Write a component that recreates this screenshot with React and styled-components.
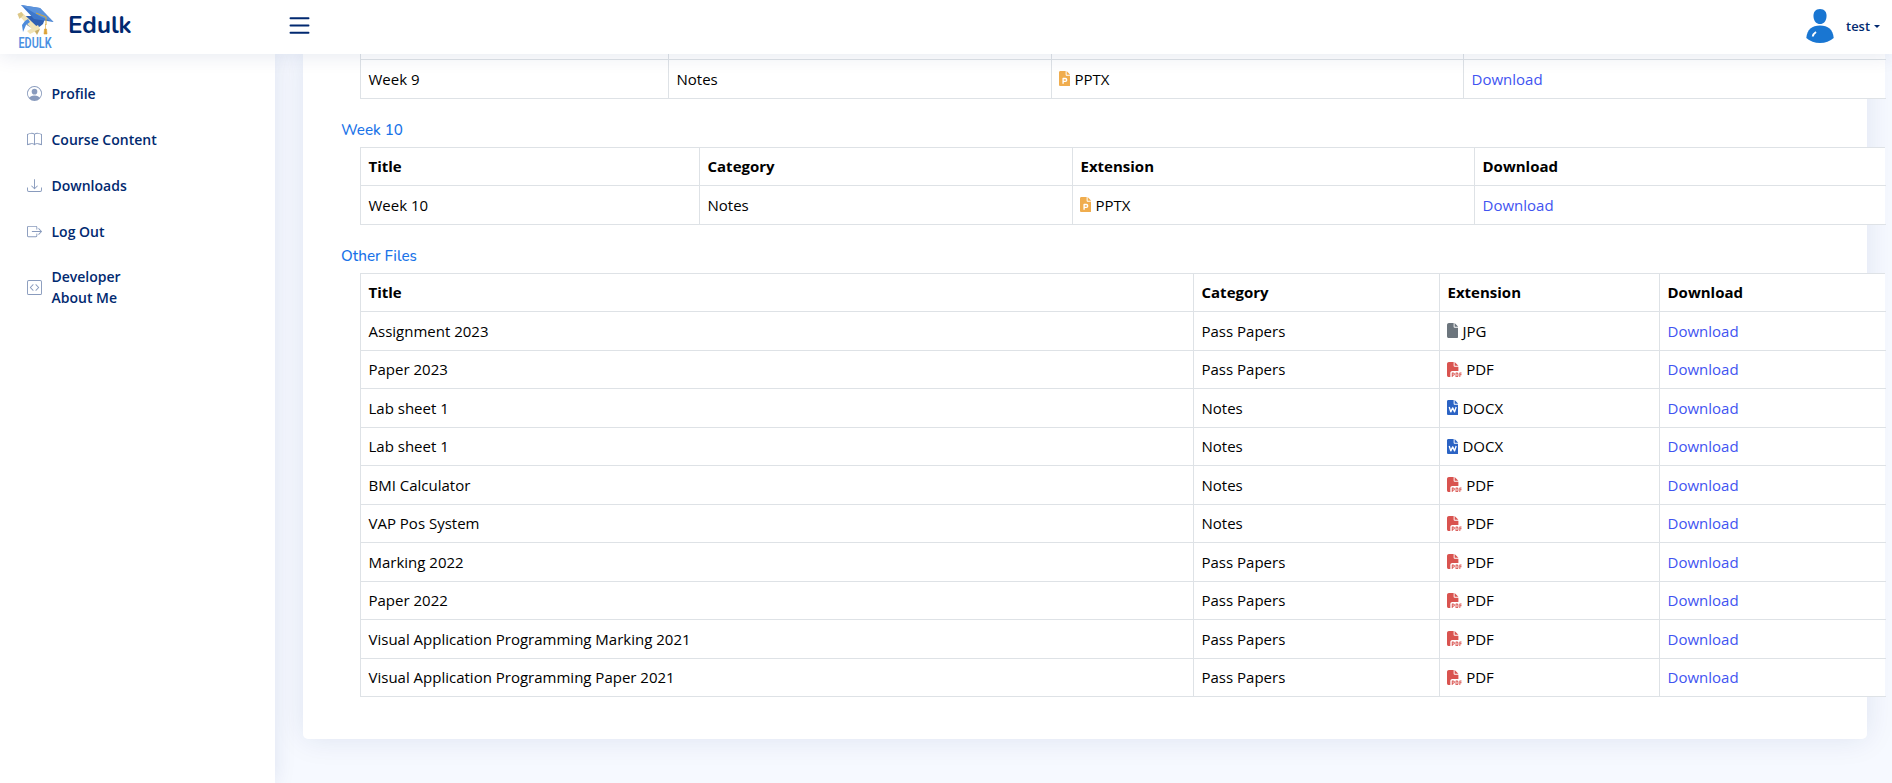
import React from "react";
import styled, { createGlobalStyle } from "styled-components";
import { BsPersonCircle, BsBook, BsDownload, BsBoxArrowRight, BsCodeSquare, BsList } from "react-icons/bs";
import { FaFile, FaFilePdf } from "react-icons/fa6";

const Global = createGlobalStyle`
  * { box-sizing: border-box; }
  body {
    margin: 0;
    height: 783px;
    overflow: hidden;
    background: #f6f9ff;
    color: #000;
    font-family: "Open Sans", sans-serif;
  }
`;

const Page = styled.div`
  display: flex;
  flex-direction: column;
  width: 100%;
  height: 783px;
  overflow: hidden;
`;

const Header = styled.header`
  display: flex;
  align-items: center;
  flex: none;
  height: 54px;
  padding: 0 12px 0 17px;
  background: #fff;
  box-shadow: 0 2px 20px rgba(1, 41, 112, 0.1);
  z-index: 2;
`;

const Brand = styled.div`
  display: flex;
  align-items: center;
  width: 268px;
  height: 54px;
`;

const BrandName = styled.span`
  margin: -3px 0 0 13px;
  color: #012970;
  font: 700 24.2px/28px Nunito, "Open Sans", sans-serif;
`;

const MenuToggle = styled.button`
  display: flex;
  padding: 0;
  border: 0;
  background: none;
  color: #012970;
  font-size: 29px;
  margin-top: -2.5px;
`;

const Account = styled.div`
  display: flex;
  align-items: center;
  margin-left: auto;
  color: #012970;
  font-size: 12.9px;
  font-weight: 600;
  line-height: 20px;

  svg { margin-top: -2px; }
`;

const AccountName = styled.span`
  margin: -3px 0 0 12px;
`;

const Caret = styled.span`
  margin: -2px 0 0 4px;
  border: 3px solid transparent;
  border-top-color: #012970;
  border-bottom: 0;
`;

const Body = styled.div`
  display: flex;
  flex: 1;
  min-height: 0;
`;

const Sidebar = styled.nav`
  flex: none;
  width: 275px;
  padding: 18px 18px 0;
  background: #fff;
  box-shadow: 0 0 20px rgba(1, 41, 112, 0.1);
`;

const NavItem = styled.a`
  display: flex;
  align-items: center;
  min-height: ${(p) => (p.$tall ? 62 : 42)}px;
  margin-bottom: 4px;
  padding: 0 9px;
  color: #012970;
  font-size: 14px;
  font-weight: 600;
  line-height: 21px;
  white-space: pre-line;

  svg {
    flex: none;
    margin-right: 9.5px;
    font-size: 15px;
    color: #899bbd;
  }
`;

const Main = styled.main`
  flex: 1;
  min-width: 0;
  padding: 0 25px 0 28px;
`;

const Card = styled.section`
  height: 685px;
  padding-left: 38px;
  background: #fff;
  border-radius: 0 0 5px 5px;
  box-shadow: 0 0 30px rgba(1, 41, 112, 0.1);
`;

const SectionTitle = styled.h2`
  display: flex;
  align-items: center;
  height: ${(p) => p.$height}px;
  margin: 0;
  padding-top: 14px;
  color: #1a73e8;
  font: 500 15.2px/20px Nunito, "Open Sans", sans-serif;
`;

const Table = styled.div`
  width: 1525px;
  margin-left: 19px;
  background: #fff;
  border: 1px solid #dee2e6;
  border-width: ${(p) => (p.$cropped ? "0 0 0 1px" : "1px 0 0 1px")};
  font-size: 15px;
`;

const Row = styled.div`
  display: grid;
  grid-template-columns: ${(p) => p.$columns};
  height: ${(p) => p.$height || 38.5}px;
  font-weight: ${(p) => (p.$head ? 700 : 400)};
`;

const Cell = styled.div`
  display: flex;
  align-items: center;
  padding: 0 7.5px 0.4px;
  border: 1px solid #dee2e6;
  border-width: 0 1px 1px 0;
  white-space: nowrap;

  &:last-child { border-right: 0; }
`;

const FileType = styled.span`
  display: flex;
  align-items: center;
  gap: 4px;
  margin-left: -0.5px;

  svg {
    flex: none;
    width: ${(p) => p.$width}px;
    height: 15.2px;
    color: ${(p) => p.$color};
  }
`;

const DownloadLink = styled.a`
  color: #4154f1;
`;

function OfficeFile({ mark }) {
  return (
    <svg viewBox="0 0 384 512" fill="currentColor">
      <path d="M50 0C20 0 0 20 0 50V462c0 30 20 50 50 50H334c30 0 50-20 50-50V160H256c-18 0-32-14-32-32V0Z" />
      <path d="M256 0V128H384Z" />
      <path d={mark} fill="none" stroke="#fff" strokeWidth="46" strokeLinejoin="round" />
    </svg>
  );
}

const WordFile = () => <OfficeFile mark="M75 235 128 400 192 265 256 400 309 235" />;
const SlidesFile = () => <OfficeFile mark="M138 430V252h72a50 50 0 0 1 0 100h-72" />;

const types = {
  JPG: [FaFile, "#6c757d", 11.4],
  PDF: [FaFilePdf, "#d9534f", 15.2],
  DOCX: [WordFile, "#2b63c4", 11.4],
  PPTX: [SlidesFile, "#f0ad4e", 11.4],
};

const headings = ["Title", "Category", "Extension", "Download"];

function FileTable({ columns, rows, cropped = false }) {
  return (
    <Table role="table" $cropped={cropped}>
      {cropped ? (
        <Row $columns={columns} $height={6}>
          {headings.map((t) => <Cell key={t} />)}
        </Row>
      ) : (
        <Row role="row" $head $columns={columns}>
          {headings.map((t) => <Cell role="columnheader" key={t}>{t}</Cell>)}
        </Row>
      )}
      {rows.map(([title, category, kind], i) => {
        const [Icon, color, width] = types[kind];
        return (
          <Row role="row" key={i} $columns={columns} $height={cropped ? 39 : 38.5}>
            <Cell role="cell">{title}</Cell>
            <Cell role="cell">{category}</Cell>
            <Cell role="cell">
              <FileType $color={color} $width={width}><Icon />{kind}</FileType>
            </Cell>
            <Cell role="cell"><DownloadLink>Download</DownloadLink></Cell>
          </Row>
        );
      })}
    </Table>
  );
}

const otherFiles = [
  ["Assignment 2023", "Pass Papers", "JPG"],
  ["Paper 2023", "Pass Papers", "PDF"],
  ["Lab sheet 1", "Notes", "DOCX"],
  ["Lab sheet 1", "Notes", "DOCX"],
  ["BMI Calculator", "Notes", "PDF"],
  ["VAP Pos System", "Notes", "PDF"],
  ["Marking 2022", "Pass Papers", "PDF"],
  ["Paper 2022", "Pass Papers", "PDF"],
  ["Visual Application Programming Marking 2021", "Pass Papers", "PDF"],
  ["Visual Application Programming Paper 2021", "Pass Papers", "PDF"],
];

function Logo() {
  return (
    <svg width="38" height="54" viewBox="0 -2 38 54" overflow="visible">
      <path d="M8 14 10 23Q18 30 26 22L29 14Z" fill="#2f5fb3" />
      <path d="M4 3 23 6 36.500 20 17 17Z" fill="#3e78cc" />
      <path d="M4 3 23 6 36.500 20 24 15Z" fill="#5b93dc" />
      <path d="M19 11 29 15v8" fill="none" stroke="#d9a93a" strokeWidth="1" />
      <path d="m.500 12 4-2 18 17-3 5Z" fill="#f1e3b6" />
      <path d="m10 29 11-6 2 4-10 5Z" fill="#f1e3b6" />
      <path d="m.500 12 4-2 2 3-4 4Z" fill="#dcc788" />
      <path d="m18 29 5-2-3 6Z" fill="#c9ae68" />
      <path d="m8 19 3-2 2 3-4 3-3 7-1-7Z" fill="#4d8bdc" />
      <path d="M28.500 22v5M27.500 27h2l.5 5h-3Z" fill="#dda135" stroke="#dda135" strokeWidth="0.6" />
      <text x="1.500" y="45.800" fill="#4a90e2" fontFamily="Roboto, sans-serif" fontWeight="600" fontSize="15.500" textLength="33" lengthAdjust="spacingAndGlyphs">EDULK</text>
    </svg>
  );
}

function Avatar() {
  return (
    <svg width="28" height="36" viewBox="0 0 28 36">
      <path d="M14 1C18.500 1 21 4 20.500 9 20 13.500 17.500 16 14 16S8 13.500 7.500 9C7 4 9.500 1 14 1Z" fill="#1976d2" />
      <path d="M.3 30C1 21.500 6 17.500 14 17.500S27 21.500 27.700 30Q22 35 14 35T.3 30Z" fill="#1976d2" />
      <path d="M6.800 28.500Q7 26 10 24" fill="none" stroke="#fff" strokeWidth="2" />
    </svg>
  );
}

export default function App() {
  return (
    <>
      <Global />
      <Page>
        <Header>
          <Brand>
            <Logo />
            <BrandName>Edulk</BrandName>
          </Brand>
          <MenuToggle aria-label="Toggle menu"><BsList /></MenuToggle>
          <Account>
            <Avatar />
            <AccountName>test</AccountName>
            <Caret />
          </Account>
        </Header>
        <Body>
          <Sidebar>
            <NavItem><BsPersonCircle />Profile</NavItem>
            <NavItem><BsBook />Course Content</NavItem>
            <NavItem><BsDownload />Downloads</NavItem>
            <NavItem><BsBoxArrowRight />Log Out</NavItem>
            <NavItem $tall><BsCodeSquare />{"Developer\nAbout Me"}</NavItem>
          </Sidebar>
          <Main>
            <Card>
              <FileTable cropped columns="308px 383px 412px 422px" rows={[["Week 9", "Notes", "PPTX"]]} />
              <SectionTitle $height={47.8}>Week 10</SectionTitle>
              <FileTable columns="339px 373px 402px 411px" rows={[["Week 10", "Notes", "PPTX"]]} />
              <SectionTitle $height={48}>Other Files</SectionTitle>
              <FileTable columns="833px 246px 220px 226px" rows={otherFiles} />
            </Card>
          </Main>
        </Body>
      </Page>
    </>
  );
}
